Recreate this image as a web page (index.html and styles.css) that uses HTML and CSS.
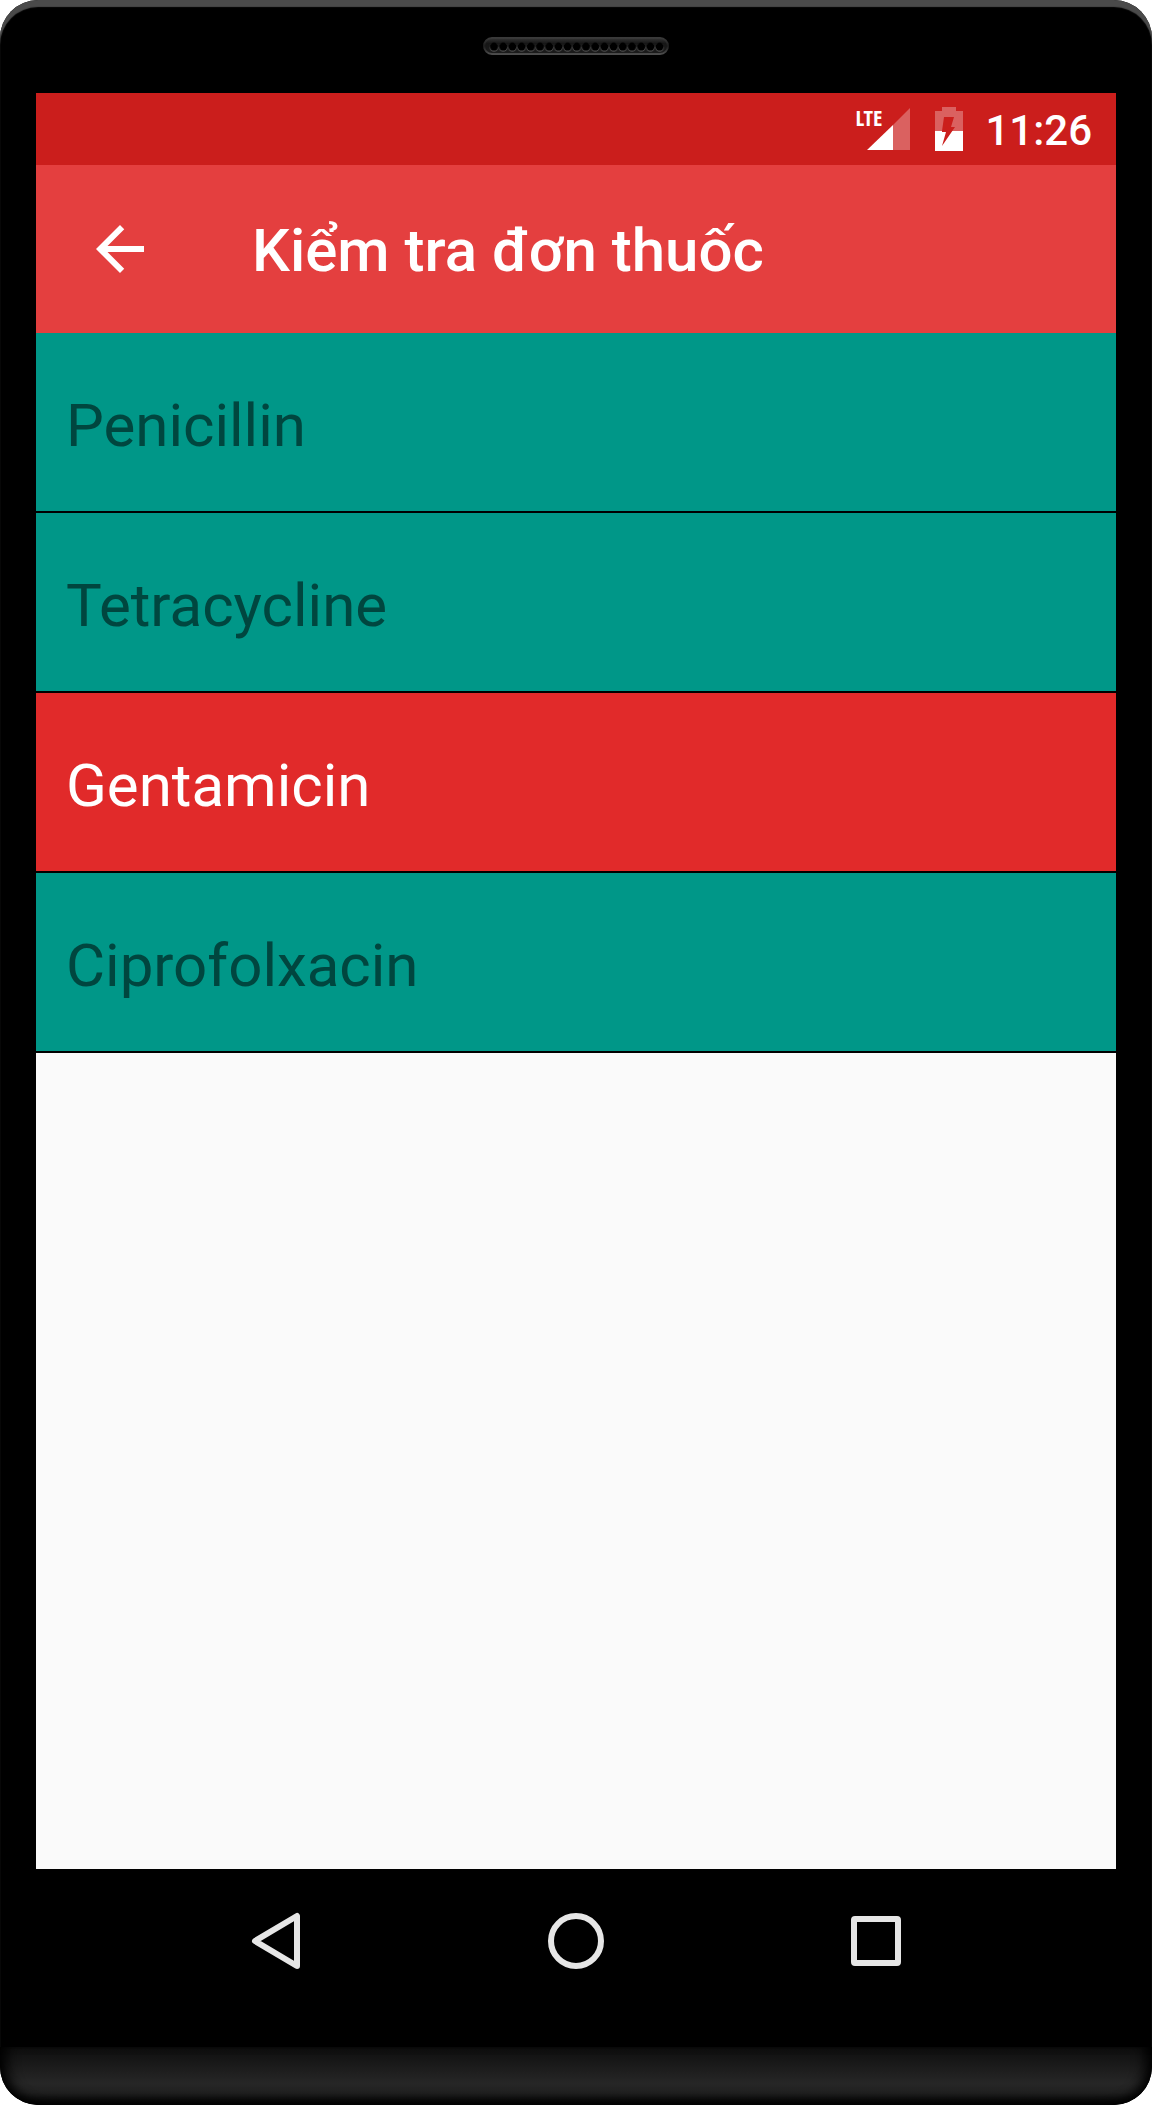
FILE: index.html
```html
<!DOCTYPE html>
<html lang="vi">
<head>
<meta charset="utf-8">
<meta name="viewport" content="width=device-width, initial-scale=1">
<title>Kiểm tra đơn thuốc</title>
<link rel="stylesheet" href="styles.css">
</head>
<body>
<div class="device">
  <div class="bezel-top">
    <svg class="speaker" width="186" height="18" viewBox="0 0 186 18" aria-hidden="true">
      <defs>
        <linearGradient id="grille" x1="0" y1="0" x2="0" y2="1">
          <stop offset="0" stop-color="#343434"/>
          <stop offset="0.35" stop-color="#161616"/>
          <stop offset="1" stop-color="#1c1c1c"/>
        </linearGradient>
        <linearGradient id="rim" x1="0" y1="0" x2="0" y2="1">
          <stop offset="0" stop-color="#3a3a3a"/>
          <stop offset="0.5" stop-color="#1c1c1c"/>
          <stop offset="1" stop-color="#4c4c4c"/>
        </linearGradient>
        <pattern id="holes" x="6.4" y="0" width="9.2" height="18" patternUnits="userSpaceOnUse">
          <circle cx="4.6" cy="10.4" r="4.3" fill="#4c4c4c"/>
          <circle cx="4.6" cy="9.6" r="4" fill="#000"/>
        </pattern>
      </defs>
      <rect x="1" y="1" width="184" height="16" rx="8" fill="url(#grille)" stroke="url(#rim)" stroke-width="2"/>
      <rect x="6.4" y="0" width="174.8" height="18" fill="url(#holes)"/>
    </svg>
  </div>

  <div class="screen">
    <div class="status-bar">
      <div class="signal">
        <svg width="43" height="42" viewBox="0 0 43 42" aria-hidden="true">
          <path d="M43 0V42H26V17Z" fill="#fff" fill-opacity=".3"/>
          <path d="M26 17V42H0Z" fill="#fff"/>
        </svg>
        <span class="network">LTE</span>
      </div>
      <svg class="battery" width="28" height="44" viewBox="0 0 28 44" aria-hidden="true">
        <path d="M7 0H21V4H28V24H17.3L20 20H16L19 10H9L7 24H0V4H7Z" fill="#fff" fill-opacity=".3"/>
        <path d="M0 24H7V25H11L7 39L17.3 24H28V44H0Z" fill="#fff"/>
      </svg>
      <time class="clock" datetime="11:26">11:26</time>
    </div>

    <header class="app-bar">
      <button class="back" type="button" aria-label="Quay lại">
        <svg width="72" height="72" viewBox="0 0 24 24" aria-hidden="true">
          <path d="M20 11H7.83l5.59-5.59L12 4l-8 8 8 8 1.41-1.41L7.83 13H20z" fill="#fff"/>
        </svg>
      </button>
      <h1 class="title">Kiểm tra đơn thuốc</h1>
    </header>

    <main class="content">
      <ul class="drugs">
        <li class="drug">Penicillin</li>
        <li class="drug">Tetracycline</li>
        <li class="drug drug-alert">Gentamicin</li>
        <li class="drug">Ciprofolxacin</li>
      </ul>
    </main>
  </div>

  <nav class="nav-bar">
    <button class="nav-button" type="button" aria-label="Back">
      <svg width="60" height="60" viewBox="0 0 60 60" aria-hidden="true">
        <path d="M51 5V55L9 30Z"/>
      </svg>
    </button>
    <button class="nav-button" type="button" aria-label="Home">
      <svg width="60" height="60" viewBox="0 0 60 60" aria-hidden="true">
        <circle cx="30" cy="30" r="25"/>
      </svg>
    </button>
    <button class="nav-button" type="button" aria-label="Recent apps">
      <svg width="60" height="60" viewBox="0 0 60 60" aria-hidden="true">
        <rect x="8" y="8" width="44" height="44" rx="1"/>
      </svg>
    </button>
  </nav>
  <div class="bezel-bottom"></div>
</div>
</body>
</html>
```
FILE: styles.css
```css
* {
  box-sizing: border-box;
}

body {
  margin: 0;
  background: #fff;
  font-family: Roboto, "Noto Sans", sans-serif;
}

button {
  padding: 0;
  border: 0;
  background: none;
  cursor: pointer;
}

svg {
  display: block;
}

.device {
  display: flex;
  flex-direction: column;
  min-height: 100vh;
  overflow: hidden;
  border-radius: 38px;
  background: #000;
  box-shadow: inset 0 7px 1px #4a4a4a;
}

.bezel-top {
  display: flex;
  justify-content: center;
  height: 93px;
  padding-top: 37px;
}

.screen {
  display: flex;
  flex: 1;
  flex-direction: column;
  margin: 0 36px;
  background: #fafafa;
}

.status-bar {
  display: flex;
  align-items: center;
  justify-content: flex-end;
  height: 72px;
  padding-right: 24px;
  background: #cb1e1c;
  color: #fff;
}

.signal {
  position: relative;
  margin-right: 25px;
}

.network {
  position: absolute;
  top: -2px;
  left: -12px;
  font-family: "Open Sans Condensed", "Noto Sans ExtraCondensed", "Roboto Condensed", "Liberation Sans Narrow", Roboto, sans-serif;
  font-size: 22px;
  font-weight: 700;
  line-height: 22px;
}

.clock {
  margin-left: 22px;
  padding-top: 3px;
  font-size: 42px;
  font-weight: 500;
  line-height: 48px;
}

.app-bar {
  display: flex;
  align-items: center;
  height: 168px;
  background: #e43f3f;
  color: #fff;
}

.back {
  display: flex;
  align-items: center;
  justify-content: center;
  width: 168px;
  height: 168px;
}

.title {
  margin: 0;
  padding: 4px 0 0 48px;
  font-size: 60px;
  font-weight: 500;
  line-height: 72px;
}

.content {
  flex: 1;
}

.drugs {
  margin: 0;
  padding: 0;
  list-style: none;
}

.drug {
  padding: 57px 30px 49px;
  border-bottom: 2px solid #000;
  background: #009788;
  color: #00463f;
  font-size: 60px;
  line-height: 72px;
}

.drug-alert {
  background: #e12a2a;
  color: #fff;
}

.nav-bar {
  display: flex;
  justify-content: center;
  height: 178px;
  padding-bottom: 34px;
}

.nav-button {
  display: flex;
  align-items: center;
  justify-content: center;
  width: 300px;
}

.nav-button svg {
  fill: none;
  stroke: #e6e6e6;
  stroke-width: 6;
  stroke-linejoin: round;
}

.bezel-bottom {
  height: 58px;
  border-radius: 0 0 38px 38px;
  background: linear-gradient(#0e0e0e, #262626 62%, #222 78%, #0a0a0a);
  box-shadow: inset 0 -8px 12px -4px #000, inset 14px 0 14px -8px #000, inset -14px 0 14px -8px #000;
}
```
